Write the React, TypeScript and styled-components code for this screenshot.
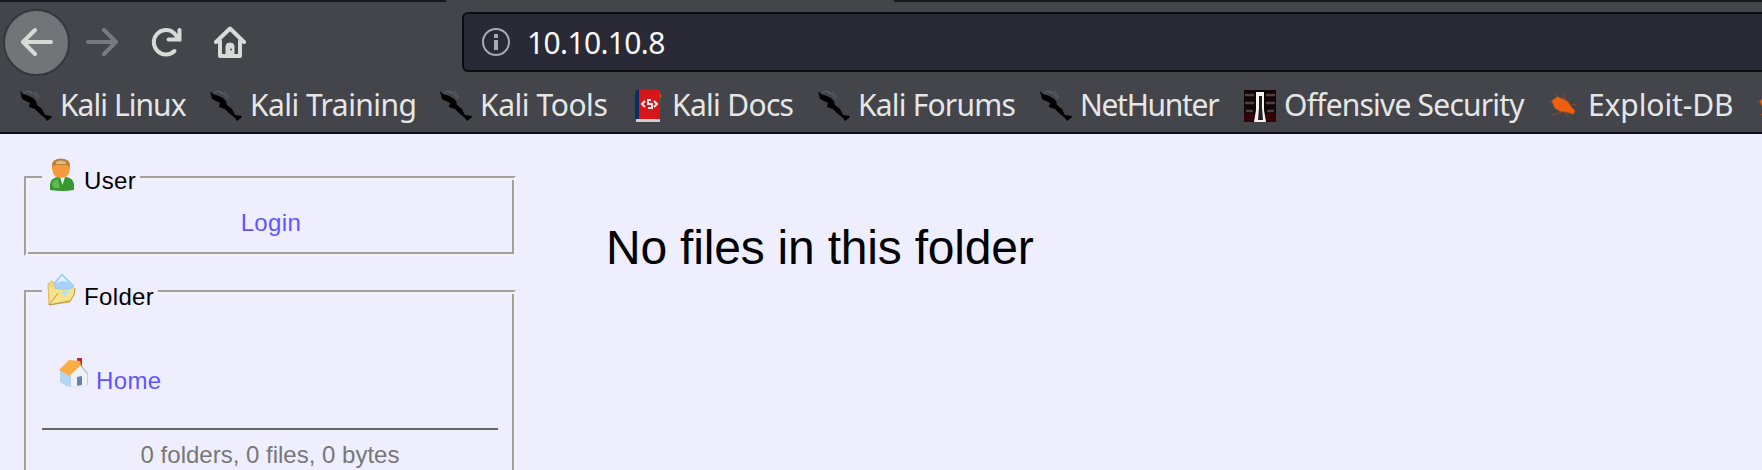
import React from 'react';
import styled, { createGlobalStyle } from 'styled-components';

const GlobalStyle = createGlobalStyle`
  *, *::before, *::after { box-sizing: border-box; }
  body { margin: 0; background: #eeeeff; overflow: hidden; }
`;

const Page = styled.div`
  height: 470px;
  display: flex;
  flex-direction: column;
  overflow: hidden;
  background: #eeeeff;
  font-family: 'Liberation Sans', Arial, sans-serif;
  font-size: 24px;
  color: #000;
`;

const Chrome = styled.header`
  flex: none;
  height: 134px;
  background: #43454b;
  border-bottom: 2px solid #0c0c12;
  font-family: 'Noto Sans', sans-serif;
  color: #e6e6e6;
`;

const TabStrip = styled.div`
  height: 2px;
  display: flex;
  justify-content: space-between;
`;

const TabEdge = styled.div<{ $width: number }>`
  width: ${(p) => p.$width}px;
  background: #17171d;
`;

const NavBar = styled.div`
  height: 70px;
  display: flex;
  align-items: flex-start;
  padding: 10px 0 0 3px;
`;

const NavButtons = styled.div`
  width: 459px;
  height: 60px;
  display: flex;
  align-items: center;
`;

const BackButton = styled.button`
  flex: none;
  width: 67px;
  height: 67px;
  padding: 0;
  display: flex;
  align-items: center;
  justify-content: center;
  border: 2px solid #36373c;
  border-radius: 50%;
  background: #737478;
`;

const ToolButton = styled.button<{ $dim?: boolean }>`
  flex: none;
  width: 64px;
  height: 60px;
  padding: 0;
  display: flex;
  align-items: center;
  justify-content: center;
  border: 0;
  background: transparent;
  opacity: ${(p) => (p.$dim ? 0.36 : 1)};
`;

const UrlBar = styled.div`
  flex: 1;
  height: 60px;
  display: flex;
  align-items: center;
  padding-left: 17px;
  gap: 16px;
  background: #292a35;
  border: 2px solid #0c0c10;
  border-right: 0;
  border-radius: 6px 0 0 6px;
  font-size: 30px;
  letter-spacing: -0.65px;
  color: #f9f9fa;
`;

const Bookmarks = styled.nav`
  height: 60px;
  display: flex;
  padding: 4px 0 0 20px;
  overflow: hidden;
  font-size: 30px;
`;

const Bookmark = styled.a<{ $width: number; $tracking: number }>`
  flex: none;
  width: ${(p) => p.$width}px;
  height: 60px;
  display: flex;
  align-items: center;
  gap: 8px;
  letter-spacing: ${(p) => p.$tracking}px;
  line-height: 40px;
  white-space: nowrap;
`;

const BookmarkLabel = styled.span`
  padding-bottom: 2px;
`;

const Content = styled.main`
  flex: 1;
  min-height: 0;
  display: flex;
  align-items: flex-start;
`;

const Sidebar = styled.aside`
  width: 492px;
  margin: 42px 0 0 24px;
  display: flex;
  flex-direction: column;
  gap: 34px;
`;

const Group = styled.section<{ $height: number }>`
  height: ${(p) => p.$height}px;
  padding: 0 16px;
  border: 2px solid;
  border-color: #a3a19e #f5f3f0 #f5f3f0 #a3a19e;
  box-shadow: inset 2px 2px 0 #f5f3f0, inset -2px -2px 0 #a3a19e;
`;

const Legend = styled.h2<{ $lift: number }>`
  width: fit-content;
  height: 36px;
  margin: -${(p) => p.$lift}px 0 0;
  padding: 0 4px;
  display: flex;
  gap: 6px;
  background: #eeeeff;
  font-size: 24px;
  font-weight: 400;
  letter-spacing: 0.35px;
  line-height: 28px;
`;

const Caption = styled.span`
  padding-top: 9px;
`;

const LoginRow = styled.div`
  padding: 15px 0 0 2px;
  text-align: center;
  line-height: 28px;
`;

const Link = styled.a`
  color: #5e55ff;
  letter-spacing: 0.4px;
`;

const HomeRow = styled.div`
  display: flex;
  gap: 6px;
  padding: 47px 0 0 16px;
  height: 118px;
  line-height: 28px;
`;

const HomeCaption = styled.span`
  padding-top: 10px;
`;

const Stats = styled.div`
  border-top: 2px solid #666;
  padding-top: 11px;
  text-align: center;
  line-height: 28px;
  color: #777;
`;

const Message = styled.p`
  margin: 86px 0 0 90px;
  font-size: 48px;
  letter-spacing: -0.2px;
  line-height: 56px;
`;

const stroke = { fill: 'none', stroke: '#d9d9d8', strokeWidth: 4, strokeLinecap: 'round', strokeLinejoin: 'round' } as const;

const ArrowIcon = ({ flip }: { flip?: boolean }) => (
  <svg width="32" height="32" viewBox="0 0 32 32" {...stroke}>
    <path d={flip ? 'M2 16H29M18 4L30 16L18 28' : 'M30 16H3M14 4L2 16L14 28'} />
  </svg>
);

const ReloadIcon = () => (
  <svg width="32" height="32" viewBox="0 0 32 32" {...stroke}>
    <path d="M24.5 25A12.2 12.2 0 1 1 24 7L28 12" />
    <path d="M29.5 4V13.5H18.5" strokeLinejoin="miter" />
  </svg>
);

const HomeIcon = () => (
  <svg width="32" height="32" viewBox="0 0 32 32" {...stroke}>
    <path d="M2 16L16 2.5L30 16" />
    <path d="M6 15V30H26V15" />
    <path d="M12 29V20Q12 17 16 17Q20 17 20 20V29Z" fill="#d9d9d8" strokeWidth="1" />
    <circle cx="17" cy="23.5" r="1" fill="#43454b" stroke="none" />
  </svg>
);

const InfoIcon = () => (
  <svg width="30" height="30" viewBox="0 0 30 30" fill="none">
    <circle cx="15" cy="15" r="13" stroke="#aaaab0" strokeWidth="2" />
    <path d="M15 7V11M15 13V23" stroke="#aaaab0" strokeWidth="4" />
  </svg>
);

const DragonIcon = () => (
  <svg width="32" height="32" viewBox="0 0 32 32">
    <path d="M4 3L8 1L12 4M9 1L14 4L18 9M14 1L19 7" fill="none" stroke="#62646a" strokeWidth="1" />
    <path d="M0 1L3 4L9 6L13 8L16 11L17 15L22 19L25 25L32 26L31 28L27 31L25 28L20 24L15 19L9 17L10 13L2 9Z" fill="#000" />
  </svg>
);

const DocsIcon = () => (
  <svg width="32" height="32" viewBox="0 0 32 32">
    <path d="M4 0H8V29H3V4Z" fill="#0b2c66" />
    <path d="M26 3L29 4L28 17L26 20Z" fill="#287568" />
    <path d="M26 2L29 4V8H26Z" fill="#cf5a14" />
    <path d="M7 0H28V29H7Z" fill="#d61619" />
    <path d="M4 29H28V32H4Z" fill="#d3cfcf" />
    <path d="M13 11L10 14L13 17M22 11L25 14L22 17M19 10H16V14H20V18H16" fill="none" stroke="#fff" strokeOpacity="0.9" strokeWidth="2" />
  </svg>
);

const OffsecIcon = () => (
  <svg width="32" height="32" viewBox="0 0 32 32">
    <path d="M0 0H32V32H0Z" fill="#120406" />
    <path d="M0 24H32V32H0Z" fill="#350306" />
    <path d="M1 5H10M1 13H10M2 21H9M22 5H31M22 13H31M23 21H30" stroke="#4b4244" strokeWidth="2.4" />
    <path d="M12 2H20V20L22 32H10L12 20Z" fill="#f4f2f0" />
    <path d="M15 6H18V18L19 30H14L15 18Z" fill="#202020" />
  </svg>
);

const BugIcon = () => (
  <svg width="32" height="32" viewBox="0 0 32 32">
    <path d="M8 4L12 11M15 4L18 10M1 11L9 14M4 25L14 22M29 14L19 16M20 27L16 21" stroke="#994a25" strokeOpacity="0.8" strokeWidth="1.2" />
    <path d="M4 11L9 7L15 9L20 12L23 17L27 21L25 24L19 22L12 21L7 18Z" fill="#ee600f" stroke="#cc5718" />
  </svg>
);

const UserIcon = () => (
  <svg width="32" height="34" viewBox="0 0 32 34">
    <path d="M4 32V26Q5 20 12 19H20Q27 20 28 26V32Q16 34 4 32Z" fill="#35992f" />
    <path d="M6 26Q7 22 12 21L14 30H8Z" fill="#5cba50" />
    <path d="M14 19H19L16.5 27Z" fill="#eef6f2" />
    <path d="M6 7Q6 1 15 1Q24 1 24 7V11Q23 20 15 20Q7 20 6 11Z" fill="#f49a3c" />
    <path d="M6 9Q5 1 15 0.5Q25 1 24 9Q22 7 20 7H10Q7 7 6 9Z" fill="#b98034" />
    <path d="M10 4Q15 1 20 4V6H10Z" fill="#d8bd8e" />
  </svg>
);

const FolderIcon = () => (
  <svg width="32" height="34" viewBox="0 0 32 34">
    <path d="M2 10L6 7L10 11L28 14L29 17L24 28L3 31Z" fill="#f3d778" stroke="#dcb95e" />
    <path d="M8 9L16 0L28 12L22 16L10 15Z" fill="#a6d2fa" stroke="#9cc6ea" />
    <path d="M10 9L16 2L22 8L16 7Z" fill="#e3f2ff" />
    <path d="M3 12L9 15L20 16L29 14L26 25L4 30Z" fill="#fbe38b" />
    <path d="M29 14L28 21L24 27L3 31L12 19" fill="none" stroke="#b9974a" />
    <path d="M14 17L25 16L19 23Z" fill="#b8e2ef" />
  </svg>
);

const HouseIcon = () => (
  <svg width="32" height="32" viewBox="0 0 32 32">
    <path d="M2 13L10 9L22 7L30 17V28L19 31L8 29L2 25Z" fill="#b5d6f0" />
    <path d="M13 18L22 8L29 17V28L19 31L13 29Z" fill="#eef2f9" />
    <path d="M19 1H24V9L19 7Z" fill="#c4282d" />
    <path d="M1 13L11 3L22 4L23 8L11 19Z" fill="#fbac43" />
    <path d="M19 20L24 19V28L19 29Z" fill="#6c7fad" />
    <path d="M23 9L30 17" stroke="#c7c2c2" strokeWidth="1.5" />
  </svg>
);

const bookmarks = [
  { label: 'Kali Linux', width: 190, tracking: -0.95, icon: <DragonIcon /> },
  { label: 'Kali Training', width: 230, tracking: -0.54, icon: <DragonIcon /> },
  { label: 'Kali Tools', width: 192, tracking: -0.43, icon: <DragonIcon /> },
  { label: 'Kali Docs', width: 186, tracking: -0.69, icon: <DocsIcon /> },
  { label: 'Kali Forums', width: 222, tracking: -0.8, icon: <DragonIcon /> },
  { label: 'NetHunter', width: 204, tracking: -1.3, icon: <DragonIcon /> },
  { label: 'Offensive Security', width: 304, tracking: -0.8, icon: <OffsecIcon /> },
  { label: 'Exploit-DB', width: 208, tracking: -0.1, icon: <BugIcon /> },
  { label: '', width: 40, tracking: 0, icon: <BugIcon /> },
];

export default function App() {
  return (
    <Page>
      <GlobalStyle />
      <Chrome>
        <TabStrip>
          <TabEdge $width={446} />
          <TabEdge $width={868} />
        </TabStrip>
        <NavBar>
          <NavButtons>
            <BackButton><ArrowIcon /></BackButton>
            <ToolButton $dim><ArrowIcon flip /></ToolButton>
            <ToolButton><ReloadIcon /></ToolButton>
            <ToolButton><HomeIcon /></ToolButton>
          </NavButtons>
          <UrlBar>
            <InfoIcon />
            <span>10.10.10.8</span>
          </UrlBar>
        </NavBar>
        <Bookmarks>
          {bookmarks.map((b, i) => (
            <Bookmark key={i} $width={b.width} $tracking={b.tracking}>
              {b.icon}
              <BookmarkLabel>{b.label}</BookmarkLabel>
            </Bookmark>
          ))}
        </Bookmarks>
      </Chrome>
      <Content>
        <Sidebar>
          <Group $height={80}>
            <Legend $lift={20}>
              <UserIcon />
              <Caption>User</Caption>
            </Legend>
            <LoginRow><Link>Login</Link></LoginRow>
          </Group>
          <Group $height={220}>
            <Legend $lift={18}>
              <FolderIcon />
              <Caption>Folder</Caption>
            </Legend>
            <HomeRow>
              <HouseIcon />
              <HomeCaption><Link>Home</Link></HomeCaption>
            </HomeRow>
            <Stats>0 folders, 0 files, 0 bytes</Stats>
          </Group>
        </Sidebar>
        <Message>No files in this folder</Message>
      </Content>
    </Page>
  );
}
